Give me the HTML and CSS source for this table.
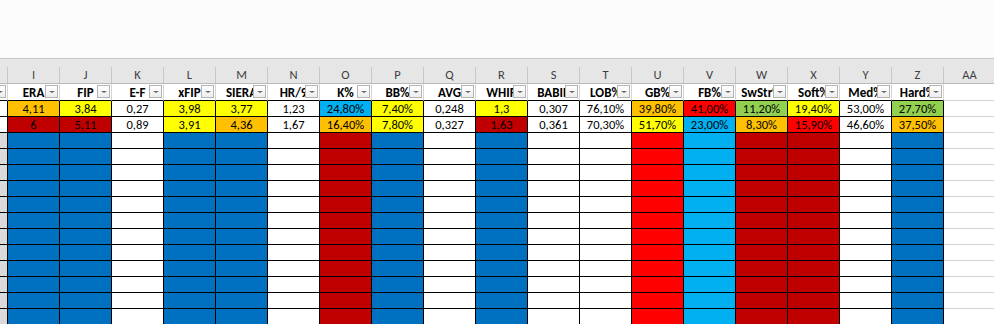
FILE: index.html
```html
<!DOCTYPE html>
<html>
<head>
<meta charset="utf-8">
<link rel="stylesheet" href="styles.css">
</head>
<body>
<div class="ribbon-gap"></div>
<div class="strip"></div>
<div class="sheet">
<table class="grid">
<colgroup>
<col><col><col><col><col><col><col><col><col><col><col><col><col><col><col><col><col><col><col><col>
</colgroup>
<thead>
<tr class="colhead">
<th></th><th>I</th><th>J</th><th>K</th><th>L</th><th>M</th><th>N</th><th>O</th><th>P</th><th>Q</th><th>R</th><th>S</th><th>T</th><th>U</th><th>V</th><th>W</th><th>X</th><th>Y</th><th>Z</th><th>AA</th>
</tr>
<tr class="filter">
<th class="k"><span class="dd"></span></th>
<th class="k"><span class="lbl">ERA</span><span class="dd"></span></th>
<th class="k"><span class="lbl">FIP</span><span class="dd"></span></th>
<th class="k"><span class="lbl">E-F</span><span class="dd"></span></th>
<th class="k"><span class="lbl">xFIP</span><span class="dd"></span></th>
<th class="k"><span class="lbl">SIERA</span><span class="dd"></span></th>
<th class="k"><span class="lbl">HR/9</span><span class="dd"></span></th>
<th class="k"><span class="lbl">K%</span><span class="dd"></span></th>
<th class="k"><span class="lbl">BB%</span><span class="dd"></span></th>
<th class="k"><span class="lbl">AVG</span><span class="dd"></span></th>
<th class="k"><span class="lbl">WHIP</span><span class="dd"></span></th>
<th class="k"><span class="lbl">BABIP</span><span class="dd"></span></th>
<th class="k"><span class="lbl">LOB%</span><span class="dd"></span></th>
<th class="k"><span class="lbl">GB%</span><span class="dd"></span></th>
<th class="k"><span class="lbl">FB%</span><span class="dd"></span></th>
<th class="k"><span class="lbl">SwStr%</span><span class="dd"></span></th>
<th class="k"><span class="lbl">Soft%</span><span class="dd"></span></th>
<th class="k"><span class="lbl">Med%</span><span class="dd"></span></th>
<th class="k"><span class="lbl">Hard%</span><span class="dd"></span></th>
<th class="e"></th>
</tr>
</thead>
<tbody>
<tr>
<td class="k w"></td>
<td class="k o">4,11</td><td class="k y">3,84</td><td class="k w">0,27</td><td class="k y">3,98</td><td class="k y">3,77</td><td class="k w">1,23</td><td class="k lb">24,80%</td><td class="k y">7,40%</td><td class="k w">0,248</td><td class="k y">1,3</td><td class="k w">0,307</td><td class="k w">76,10%</td><td class="k o">39,80%</td><td class="k r">41,00%</td><td class="k g">11,20%</td><td class="k y">19,40%</td><td class="k w">53,00%</td><td class="k g">27,70%</td>
<td class="e"></td>
</tr>
<tr>
<td class="k w"></td>
<td class="k dr">6</td><td class="k dr">5,11</td><td class="k w">0,89</td><td class="k y">3,91</td><td class="k o">4,36</td><td class="k w">1,67</td><td class="k o">16,40%</td><td class="k y">7,80%</td><td class="k w">0,327</td><td class="k dr">1,63</td><td class="k w">0,361</td><td class="k w">70,30%</td><td class="k y">51,70%</td><td class="k lb">23,00%</td><td class="k o">8,30%</td><td class="k r">15,90%</td><td class="k w">46,60%</td><td class="k o">37,50%</td>
<td class="e"></td>
</tr>
<tr class="blank"><td class="k hg"></td><td class="k b"></td><td class="k b"></td><td class="k w"></td><td class="k b"></td><td class="k b"></td><td class="k w"></td><td class="k dr"></td><td class="k b"></td><td class="k w"></td><td class="k b"></td><td class="k w"></td><td class="k w"></td><td class="k r"></td><td class="k lb"></td><td class="k dr"></td><td class="k dr"></td><td class="k w"></td><td class="k b"></td><td class="e"></td></tr>
<tr class="blank"><td class="k hg"></td><td class="k b"></td><td class="k b"></td><td class="k w"></td><td class="k b"></td><td class="k b"></td><td class="k w"></td><td class="k dr"></td><td class="k b"></td><td class="k w"></td><td class="k b"></td><td class="k w"></td><td class="k w"></td><td class="k r"></td><td class="k lb"></td><td class="k dr"></td><td class="k dr"></td><td class="k w"></td><td class="k b"></td><td class="e"></td></tr>
<tr class="blank"><td class="k hg"></td><td class="k b"></td><td class="k b"></td><td class="k w"></td><td class="k b"></td><td class="k b"></td><td class="k w"></td><td class="k dr"></td><td class="k b"></td><td class="k w"></td><td class="k b"></td><td class="k w"></td><td class="k w"></td><td class="k r"></td><td class="k lb"></td><td class="k dr"></td><td class="k dr"></td><td class="k w"></td><td class="k b"></td><td class="e"></td></tr>
<tr class="blank"><td class="k hg"></td><td class="k b"></td><td class="k b"></td><td class="k w"></td><td class="k b"></td><td class="k b"></td><td class="k w"></td><td class="k dr"></td><td class="k b"></td><td class="k w"></td><td class="k b"></td><td class="k w"></td><td class="k w"></td><td class="k r"></td><td class="k lb"></td><td class="k dr"></td><td class="k dr"></td><td class="k w"></td><td class="k b"></td><td class="e"></td></tr>
<tr class="blank"><td class="k hg"></td><td class="k b"></td><td class="k b"></td><td class="k w"></td><td class="k b"></td><td class="k b"></td><td class="k w"></td><td class="k dr"></td><td class="k b"></td><td class="k w"></td><td class="k b"></td><td class="k w"></td><td class="k w"></td><td class="k r"></td><td class="k lb"></td><td class="k dr"></td><td class="k dr"></td><td class="k w"></td><td class="k b"></td><td class="e"></td></tr>
<tr class="blank"><td class="k hg"></td><td class="k b"></td><td class="k b"></td><td class="k w"></td><td class="k b"></td><td class="k b"></td><td class="k w"></td><td class="k dr"></td><td class="k b"></td><td class="k w"></td><td class="k b"></td><td class="k w"></td><td class="k w"></td><td class="k r"></td><td class="k lb"></td><td class="k dr"></td><td class="k dr"></td><td class="k w"></td><td class="k b"></td><td class="e"></td></tr>
<tr class="blank"><td class="k hg"></td><td class="k b"></td><td class="k b"></td><td class="k w"></td><td class="k b"></td><td class="k b"></td><td class="k w"></td><td class="k dr"></td><td class="k b"></td><td class="k w"></td><td class="k b"></td><td class="k w"></td><td class="k w"></td><td class="k r"></td><td class="k lb"></td><td class="k dr"></td><td class="k dr"></td><td class="k w"></td><td class="k b"></td><td class="e"></td></tr>
<tr class="blank"><td class="k hg"></td><td class="k b"></td><td class="k b"></td><td class="k w"></td><td class="k b"></td><td class="k b"></td><td class="k w"></td><td class="k dr"></td><td class="k b"></td><td class="k w"></td><td class="k b"></td><td class="k w"></td><td class="k w"></td><td class="k r"></td><td class="k lb"></td><td class="k dr"></td><td class="k dr"></td><td class="k w"></td><td class="k b"></td><td class="e"></td></tr>
<tr class="blank"><td class="k hg"></td><td class="k b"></td><td class="k b"></td><td class="k w"></td><td class="k b"></td><td class="k b"></td><td class="k w"></td><td class="k dr"></td><td class="k b"></td><td class="k w"></td><td class="k b"></td><td class="k w"></td><td class="k w"></td><td class="k r"></td><td class="k lb"></td><td class="k dr"></td><td class="k dr"></td><td class="k w"></td><td class="k b"></td><td class="e"></td></tr>
<tr class="blank"><td class="k hg"></td><td class="k b"></td><td class="k b"></td><td class="k w"></td><td class="k b"></td><td class="k b"></td><td class="k w"></td><td class="k dr"></td><td class="k b"></td><td class="k w"></td><td class="k b"></td><td class="k w"></td><td class="k w"></td><td class="k r"></td><td class="k lb"></td><td class="k dr"></td><td class="k dr"></td><td class="k w"></td><td class="k b"></td><td class="e"></td></tr>
<tr class="blank"><td class="k hg"></td><td class="k b"></td><td class="k b"></td><td class="k w"></td><td class="k b"></td><td class="k b"></td><td class="k w"></td><td class="k dr"></td><td class="k b"></td><td class="k w"></td><td class="k b"></td><td class="k w"></td><td class="k w"></td><td class="k r"></td><td class="k lb"></td><td class="k dr"></td><td class="k dr"></td><td class="k w"></td><td class="k b"></td><td class="e"></td></tr>
<tr class="blank"><td class="k hg"></td><td class="k b"></td><td class="k b"></td><td class="k w"></td><td class="k b"></td><td class="k b"></td><td class="k w"></td><td class="k dr"></td><td class="k b"></td><td class="k w"></td><td class="k b"></td><td class="k w"></td><td class="k w"></td><td class="k r"></td><td class="k lb"></td><td class="k dr"></td><td class="k dr"></td><td class="k w"></td><td class="k b"></td><td class="e"></td></tr>
</tbody>
</table>
</div>
</body>
</html>
```
FILE: styles.css
```css
html, body {
  margin: 0;
  padding: 0;
  background: #ffffff;
  overflow: hidden;
}
body {
  width: 994px;
  height: 324px;
  font-family: Carlito, "Liberation Sans", Arial, sans-serif;
}
.ribbon-gap {
  height: 58px;
  background: #fcfcfc;
  border-bottom: 1px solid #c6c6c6;
}
.strip {
  height: 8px;
  background: #e6e6e6;
}
.sheet {
  width: 994px;
  height: 257px;
  overflow: hidden;
}
.grid {
  margin-left: -44px;
  width: 1040px;
  table-layout: fixed;
  border-collapse: separate;
  border-spacing: 0;
}
.grid th, .grid td {
  padding: 0;
  overflow: hidden;
  white-space: nowrap;
  text-align: center;
}
.colhead th {
  height: 16px;
  background: #e6e6e6;
  border-right: 1px solid #c8c8c8;
  border-bottom: 1px solid #b9b9b9;
  font-weight: normal;
  font-size: 12.5px;
  line-height: 16px;
  color: #3f3f3f;
}
.filter th {
  position: relative;
  height: 16px;
  background: #ffffff;
  border-right: 1px solid #d4d4d4;
  font-size: 13px;
  line-height: 16px;
  font-weight: bold;
  color: #000;
}
.filter th.k {
  border-bottom: 1px solid #000;
}
.filter th.e {
  border-bottom: 1px solid #d4d4d4;
}
.lbl {
  display: block;
  height: 16px;
  padding-top: 1px;
  box-sizing: border-box;
}
.dd {
  position: absolute;
  right: 1px;
  top: 1px;
  width: 11px;
  height: 11px;
  border: 1px solid #b4b4b4;
  background: linear-gradient(#ffffff, #ededed);
}
.dd::after {
  content: "";
  position: absolute;
  left: 3px;
  top: 5px;
  border-left: 3px solid transparent;
  border-right: 3px solid transparent;
  border-top: 2px solid #6a6a6a;
}
tbody td {
  height: 15px;
  font-size: 12.5px;
  line-height: 15px;
  color: #000;
}
td.k {
  border-right: 1px solid #000;
  border-bottom: 1px solid #000;
}
td.e {
  background: #ffffff;
  border-right: 1px solid #d4d4d4;
  border-bottom: 1px solid #d4d4d4;
}
.w { background: #ffffff; }
.o { background: #ffc000; }
.y { background: #ffff00; }
.dr { background: #c00000; }
.lb { background: #00b0f0; }
.r { background: #ff0000; }
.g { background: #92d050; }
.b { background: #0070c0; }
.hg { background: #d9d9d9; }
```
